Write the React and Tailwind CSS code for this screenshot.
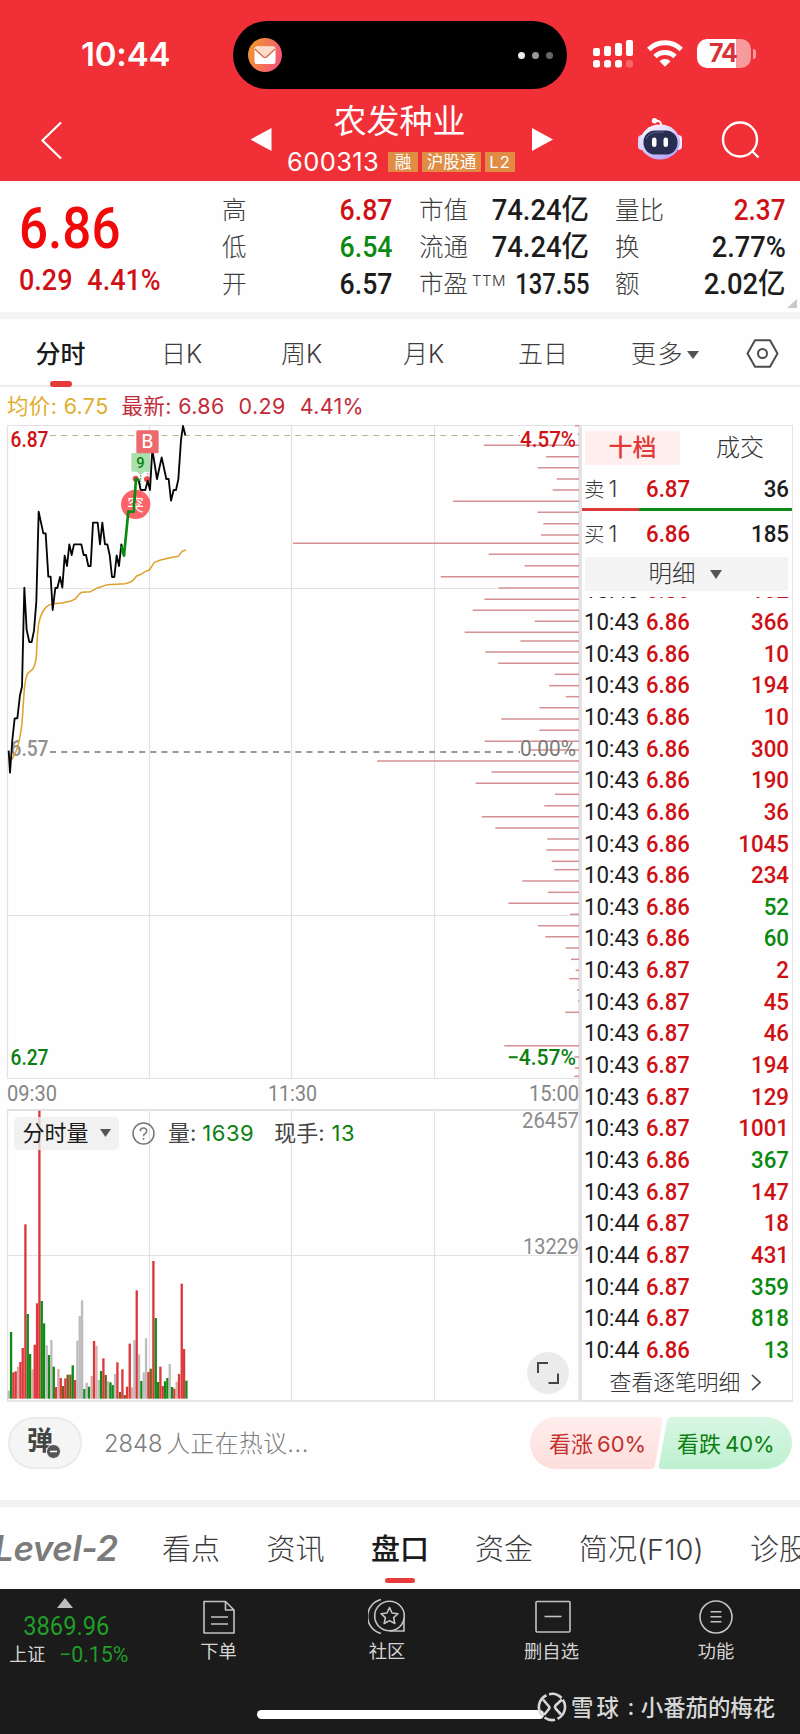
import React from "react";

const NUM = "font-['Roboto','Noto_Sans_CJK_SC',sans-serif] inline-block whitespace-nowrap";

/* ---------- data ---------- */

const trades = [
  ["10:43", "6.86", "366", "r"],
  ["10:43", "6.86", "10", "r"],
  ["10:43", "6.86", "194", "r"],
  ["10:43", "6.86", "10", "r"],
  ["10:43", "6.86", "300", "r"],
  ["10:43", "6.86", "190", "r"],
  ["10:43", "6.86", "36", "r"],
  ["10:43", "6.86", "1045", "r"],
  ["10:43", "6.86", "234", "r"],
  ["10:43", "6.86", "52", "g"],
  ["10:43", "6.86", "60", "g"],
  ["10:43", "6.87", "2", "r"],
  ["10:43", "6.87", "45", "r"],
  ["10:43", "6.87", "46", "r"],
  ["10:43", "6.87", "194", "r"],
  ["10:43", "6.87", "129", "r"],
  ["10:43", "6.87", "1001", "r"],
  ["10:43", "6.86", "367", "g"],
  ["10:43", "6.87", "147", "r"],
  ["10:44", "6.87", "18", "r"],
  ["10:44", "6.87", "431", "r"],
  ["10:44", "6.87", "359", "g"],
  ["10:44", "6.87", "818", "g"],
  ["10:44", "6.86", "13", "g"],
];

// [y, start x] of each traded-volume-by-price line; all end at the right edge of the plot
const chips = [
  [17, 885], [43, 893], [76, 611], [110, 798], [143, 773], [177, 830], [210, 818], [244, 519],
  [277, 772], [311, 790], [345, 783], [370, 39], [403, 626], [437, 734], [470, 482], [504, 656],
  [538, 613], [571, 578], [604, 764], [637, 554], [663, 721], [696, 616], [730, 654], [763, 824],
  [797, 807], [830, 857], [863, 778], [897, 664], [931, 778], [964, 614], [990, 750], [1023, 291],
  [1056, 634], [1090, 587], [1123, 825], [1157, 793], [1190, 605], [1224, 646], [1257, 802],
  [1290, 799], [1324, 815], [1349, 823], [1383, 727], [1417, 804], [1450, 685], [1483, 870],
  [1517, 774], [1550, 796], [1584, 857], [1618, 873], [1651, 887], [1676, 868], [1710, 891],
  [1743, 894], [1777, 856], [1877, 673], [1911, 883], [1944, 885], [1969, 883],
];

const volume = [
  [26, 932, "n"], [33, 756, "g"], [40, 877, "r"], [47, 874, "r"], [54, 860, "p"], [61, 846, "r"],
  [68, 804, "r"], [76, 433, "r"], [83, 702, "g"], [90, 822, "g"], [97, 868, "p"], [104, 794, "r"],
  [111, 670, "r"], [118, 92, "r"], [125, 663, "g"], [132, 730, "g"], [140, 796, "n"], [147, 825, "g"],
  [154, 780, "n"], [161, 860, "g"], [168, 921, "r"], [175, 867, "p"], [182, 894, "r"], [189, 918, "o"],
  [196, 895, "r"], [203, 884, "o"], [211, 884, "o"], [218, 856, "g"], [225, 900, "r"], [232, 782, "n"],
  [239, 708, "n"], [246, 661, "n"], [253, 927, "g"], [260, 908, "n"], [267, 920, "g"], [275, 888, "p"],
  [282, 783, "r"], [289, 797, "p"], [296, 900, "n"], [303, 873, "g"], [310, 835, "r"], [317, 885, "o"],
  [324, 904, "n"], [331, 907, "g"], [338, 915, "g"], [345, 882, "n"], [352, 847, "r"], [360, 936, "o"],
  [367, 868, "r"], [374, 945, "o"], [381, 920, "r"], [389, 791, "r"], [396, 922, "p"], [403, 780, "n"],
  [410, 631, "r"], [417, 823, "n"], [424, 903, "g"], [431, 877, "n"], [438, 775, "n"], [445, 876, "r"],
  [452, 866, "o"], [460, 543, "r"], [467, 714, "g"], [474, 906, "g"], [481, 860, "r"], [488, 918, "r"],
  [495, 904, "g"], [502, 894, "g"], [509, 852, "n"], [516, 921, "g"], [523, 926, "r"], [530, 905, "p"],
  [537, 882, "r"], [545, 611, "r"], [552, 807, "r"], [559, 902, "g"],
];

const barFill = { r: "#dc383c", g: "#118a16", n: "#bcbcbc", p: "#dba9a6", o: "#7c5a1a" };

/* ---------- header ---------- */

function Island() {
  return (
    <div className="flex h-[68px] w-[334px] items-center justify-between rounded-full bg-black pl-[15px] pr-[14px]">
      <svg width="34" height="34" viewBox="0 0 34 34">
        <defs>
          <linearGradient id="mail" x1="0" x2="1" y1="0.3" y2="0.7">
            <stop offset="0" stopColor="#f0982c" />
            <stop offset="1" stopColor="#f4507c" />
          </linearGradient>
        </defs>
        <circle cx="17" cy="17" r="17" fill="url(#mail)" />
        <rect x="6.5" y="8.5" width="21" height="17.5" rx="2.5" fill="#fff" />
        <path d="M6.5 10.5Q6.8 8.5 9 8.500H25Q27.200 8.500 27.500 10.500L18.500 19Q17 20.200 15.500 19Z" fill="#fbdcca" />
        <path d="M6.8 11l8.700 8q1.500 1.200 3 0l8.700-8" fill="none" stroke="#d4674a" strokeWidth="1.300" />
      </svg>
      <div className="flex gap-[7px]">
        <span className="size-[7px] rounded-full bg-[#ececec]" />
        <span className="size-[7px] rounded-full bg-[#999]" />
        <span className="size-[7px] rounded-full bg-[#666]" />
      </div>
    </div>
  );
}

function StatusBar() {
  return (
    <div className="flex h-[89px] items-start pt-[21px]">
      <div className="flex h-[68px] w-[233px] items-center pl-[81px] text-[33px] font-semibold tracking-[-0.2px] text-white">
        10:44
      </div>
      <Island />
      <div className="flex h-[68px] items-center pl-[25px] pb-[3px]">
        <svg width="42" height="29" viewBox="0 0 42 29" fill="#fff">
          <rect x="1" y="9" width="7" height="8" rx="2" />
          <rect x="12" y="7" width="7" height="10" rx="2" />
          <rect x="23" y="4" width="7" height="13" rx="2" />
          <rect x="34" y="1" width="7" height="16" rx="2" />
          <rect x="1" y="21" width="7" height="7.500" rx="2.500" />
          <rect x="12" y="21" width="7" height="7.500" rx="2.500" />
          <rect x="23" y="21" width="7" height="7.500" rx="2.500" />
          <rect x="34" y="21" width="7" height="7.500" rx="2.500" opacity="0.25" />
        </svg>
        <svg className="ml-[12px]" width="38" height="29" viewBox="0 0 38 29" fill="none" stroke="#fff" strokeWidth="5">
          <path d="M2.800 10.500A23 23 0 0 1 35.200 10.500" />
          <path d="M9 17.500A14.500 14.500 0 0 1 29 17.500" />
          <path d="M13.500 22.200A8 8 0 0 1 24.500 22.200L19 27.800Z" fill="#fff" stroke="none" />
        </svg>
        <div className="ml-[13px] flex h-[29px] w-[54px] items-center justify-center rounded-[10px] bg-[linear-gradient(90deg,#fff_73%,#f79a9c_73%)] pr-[2px] font-['Inter'] text-[25px] font-bold tracking-[-1px] text-[#d8323a]">
          74
        </div>
        <span className="ml-[2px] h-[10px] w-[3px] rounded-r-full bg-[#f79a9c]" />
      </div>
    </div>
  );
}

function Robot() {
  return (
    <svg width="46" height="44" viewBox="0 0 46 44">
      <defs>
        <linearGradient id="head" x1="0" x2="0.6" y1="0" y2="1">
          <stop offset="0" stopColor="#ffffff" />
          <stop offset="1" stopColor="#b9a6fb" />
        </linearGradient>
      </defs>
      <path d="M24 8Q24.500 4 19 3.500" fill="none" stroke="#fff" strokeWidth="2" />
      <circle cx="17.500" cy="3.700" r="2.700" fill="#fff" />
      <rect x="1" y="18" width="9" height="15" rx="4" fill="#d9d3fb" />
      <rect x="36" y="18" width="9" height="15" rx="4" fill="#f0ecff" />
      <ellipse cx="23" cy="25" rx="20" ry="17.500" fill="url(#head)" />
      <rect x="6.500" y="13.500" width="34" height="24" rx="11.500" fill="#282d52" />
      <path d="M9 22Q12 15 22 15H27" fill="none" stroke="#5a5f94" strokeWidth="1" />
      <rect x="15" y="20.500" width="4.500" height="9.500" rx="2.200" fill="#fff" />
      <rect x="26.500" y="20.500" width="4.500" height="9.500" rx="2.200" fill="#fff" />
    </svg>
  );
}

function NavBar() {
  return (
    <div className="flex h-[92px] items-start text-white">
      <svg className="ml-[40px] mt-[32px]" width="24" height="40" viewBox="0 0 24 40" fill="none" stroke="#fff" strokeWidth="2.200">
        <path d="M21 1.500L2.500 19.500L21 37.500" />
      </svg>
      <svg className="ml-[186px] mt-[38px]" width="22" height="25" viewBox="0 0 22 25">
        <path d="M0.500 12.500L21.500 1V24Z" fill="#fff" />
      </svg>
      <div className="ml-[15px] flex w-[229px] flex-col">
        <div className="flex h-[57px] items-center justify-center pt-[8px] text-[33px]">
          <span className="whitespace-nowrap pr-[4px] leading-none">农发种业</span>
        </div>
        <div className="flex h-[31px] items-center">
          <span className="inline-block w-[101px] text-[25.500px] leading-none tracking-[0.400px]">600313</span>
          <div className="flex gap-[4px] text-[16.500px] leading-[20px]">
            <span className="h-[20px] w-[30px] bg-[#e08c45] text-center">融</span>
            <span className="h-[20px] w-[59px] bg-[#e08c45] text-center">沪股通</span>
            <span className="h-[20px] w-[30px] bg-[#e08c45] text-center tracking-[1px]">L2</span>
          </div>
        </div>
      </div>
      <svg className="ml-[16px] mt-[38px]" width="21" height="25" viewBox="0 0 21 25">
        <path d="M21 12.500L0 1V24Z" fill="#fff" />
      </svg>
      <div className="ml-[84px] mt-[28px]">
        <Robot />
      </div>
      <svg className="ml-[38px] mt-[31px]" width="40" height="40" viewBox="0 0 40 40" fill="none" stroke="#fff" strokeWidth="2.400">
        <circle cx="19" cy="19.500" r="17" />
        <path d="M31 31L37.500 37.500" />
      </svg>
    </div>
  );
}

/* ---------- quote ---------- */

function Stat({ label, sup, value, color, scale = "scale-x-[.92]" }) {
  return (
    <div className="flex h-[37px] items-center justify-between">
      <span className="flex shrink-0 items-center whitespace-nowrap text-[24.500px] font-light leading-none text-[#3c3c3c]">
        {label}
        {sup && <span className="-mt-[8px] -mr-[20px] ml-[4px] w-[34px] text-[15px] leading-none tracking-[0.500px]">{sup}</span>}
      </span>
      <span className={NUM + " origin-right text-[29px] font-medium leading-none " + scale + " " + color}>{value}</span>
    </div>
  );
}

function Quote() {
  return (
    <div className="flex h-[131px] bg-[#fefefe]">
      <div className="flex w-[222px] flex-col pl-[19px]">
        <div className={NUM + " mt-[18px] h-[62px] origin-left scale-x-[.89] text-[57.500px] font-medium leading-[60px] text-[#f00a0a]"}>6.86</div>
        <div className={NUM + " h-[36px] origin-left scale-x-[.93] text-[29px] font-medium leading-[38px] text-[#cf1014]"}>
          0.29<span className="ml-[16px]">4.41%</span>
        </div>
      </div>
      <div className="w-[171px] pt-[11px]">
        <Stat label="高" value="6.87" color="text-[#cf1014]" />
        <Stat label="低" value="6.54" color="text-[#0a8a10]" />
        <Stat label="开" value="6.57" color="text-[#1c1c1c]" />
      </div>
      <div className="ml-[26px] w-[170px] pt-[11px]">
        <Stat label="市值" value="74.24亿" color="text-[#1c1c1c]" scale="scale-x-[.945]" />
        <Stat label="流通" value="74.24亿" color="text-[#1c1c1c]" scale="scale-x-[.945]" />
        <Stat label="市盈" sup="TTM" value="137.55" color="text-[#1c1c1c]" scale="scale-x-[.82]" />
      </div>
      <div className="ml-[26px] w-[171px] pt-[11px]">
        <Stat label="量比" value="2.37" color="text-[#cf1014]" scale="scale-x-[.9]" />
        <Stat label="换" value="2.77%" color="text-[#1c1c1c]" scale="scale-x-[.94]" />
        <Stat label="额" value="2.02亿" color="text-[#1c1c1c]" scale="scale-x-[.945]" />
      </div>
      <svg className="mt-[118px] ml-[1px] shrink-0" width="10" height="10" viewBox="0 0 10 10">
        <path d="M10 0V9H0Z" fill="#c8c8c8" />
      </svg>
    </div>
  );
}

function PeriodTabs() {
  return (
    <div className="flex h-[68px] items-start border-b-2 border-[#ececec] bg-[#fefefe] text-[25px] font-light text-[#3c3c3c]">
      <div className="flex w-[121px] flex-col items-center">
        <span className="flex h-[62px] items-center pt-[9px] font-medium text-[#1a1a1a]">分时</span>
        <span className="h-[6px] w-[22px] rounded-full bg-[#e63b38]" />
      </div>
      <div className="flex h-[62px] w-[121px] items-center justify-center pt-[9px]">日K</div>
      <div className="flex h-[62px] w-[119px] items-center justify-center pt-[9px]">周K</div>
      <div className="flex h-[62px] w-[125px] items-center justify-center pt-[9px]">月K</div>
      <div className="flex h-[62px] w-[114px] items-center justify-center pt-[9px]">五日</div>
      <div className="flex h-[62px] w-[128px] items-center justify-center pt-[9px]">
        <span className="pl-[2px] tracking-[1.500px]">更多</span>
        <svg className="ml-[3px]" width="12" height="8" viewBox="0 0 12 8"><path d="M0 0H12L6 8Z" fill="#555" /></svg>
      </div>
      <svg className="ml-[18px] mt-[20px]" width="33" height="29" viewBox="0 0 33 29" fill="none" stroke="#4c4c4c" strokeWidth="2">
        <path d="M9 1.200H24L31.500 14.500L24 27.800H9L1.500 14.500Z" strokeLinejoin="round" />
        <circle cx="16.500" cy="14.500" r="4.500" />
      </svg>
    </div>
  );
}

/* ---------- charts ---------- */

const DIN = "Roboto, sans-serif";

function PriceChart() {
  return (
    <svg className="block overflow-visible" width="580" height="690" viewBox="0 420 580 690">
      <g stroke="#e2e2e4" strokeWidth="1.200" fill="none">
        <path d="M7.500 425.500H579M7.500 588.500H579M7.500 915.500H579M7.500 1078.500H579" />
        <path d="M7.500 425V1079M149.500 425V1079M291.500 425V1079M434.500 425V1079" />
      </g>
      <path d="M579.300 425V1110" stroke="#dddde0" strokeWidth="1.500" />
      <path d="M50 435.500H520" stroke="#c0b28c" strokeWidth="1.200" strokeDasharray="6 5.150" />
      <path d="M50 752H520" stroke="#777" strokeWidth="1.300" strokeDasharray="6 5.150" />
      <g transform="translate(280 420) scale(0.33333)" stroke="#d59092" strokeWidth="4.500">
        {chips.map(([y, x]) => (
          <path key={y} d={`M${x} ${y}H897`} />
        ))}
      </g>
      <g fontFamily={DIN} fontSize="21.500">
        <text x="10.500" y="446.500" fill="#cf1014" fontWeight="500" textLength="38" lengthAdjust="spacingAndGlyphs">6.87</text>
        <text x="576" y="446.500" fill="#cf1014" fontWeight="500" textAnchor="end" textLength="56" lengthAdjust="spacingAndGlyphs">4.57%</text>
        <text x="10.500" y="755.500" fill="#909090" fontWeight="500" textLength="38" lengthAdjust="spacingAndGlyphs">6.57</text>
        <text x="576" y="755.500" fill="#7b7b7b" textAnchor="end" textLength="56" lengthAdjust="spacingAndGlyphs">0.00%</text>
        <text x="10.500" y="1065" fill="#0a7f10" fontWeight="500" textLength="38" lengthAdjust="spacingAndGlyphs">6.27</text>
        <text x="576" y="1065" fill="#0a7f10" fontWeight="500" textAnchor="end" textLength="69" lengthAdjust="spacingAndGlyphs">−4.57%</text>
        <text x="7" y="1101" fill="#858585" textLength="50" lengthAdjust="spacingAndGlyphs">09:30</text>
        <text x="268" y="1101" fill="#858585" textLength="49" lengthAdjust="spacingAndGlyphs">11:30</text>
        <text x="579" y="1101" fill="#858585" textAnchor="end" textLength="50" lengthAdjust="spacingAndGlyphs">15:00</text>
      </g>
      <g transform="translate(0 420) scale(0.33333)" fill="none" strokeLinejoin="round">
        <path
          stroke="#dfa02c"
          strokeWidth="4.500"
          d="M36 1018L50 990Q60 960 66 910L72 820Q75 780 82 762Q88 755 98 748Q106 735 109 710L112 650L116 610Q124 575 140 560Q150 552 160 551L185 549L210 544L226 537L236 524L245 517L272 515L290 505L322 494L375 491L390 487L398 482L410 468L425 462L435 455L448 450L463 427L482 420L510 413L535 409L546 394L558 390"
        />
        <path
          stroke="#050505"
          strokeWidth="5.500"
          d="M26 992L30 1058L37 960L44 895H52L60 825L66 800L73 503L80 630L88 666H95L102 632L109 545L116 275L123 308L130 340H137L145 470H152L158 570L166 504H172L180 471L187 503L194 407L201 438L208 373L215 405L222 373H244L251 405H258L265 438H272L279 308H293L300 373L307 308L315 373H322L329 405L336 471H343L350 406L357 438L364 373L372 405"
        />
        <path stroke="#f0656c" strokeWidth="4" strokeDasharray="4 4.500" d="M443 100V172" />
        <path stroke="#0a8a10" strokeWidth="3" strokeDasharray="4 4" d="M422 166V206" />
        <circle cx="407" cy="176" r="9" fill="#ee4a50" />
        <circle cx="441" cy="178" r="9" fill="#ee4a50" />
        <path stroke="#050505" strokeWidth="5.500" d="M415 177L422 210H436L443 182L450 210L457 88L471 177L485 112L499 177H506L513 242L521 210H528L535 178L543 60L549 18L556 46" />
        <circle cx="407" cy="253" r="44" fill="#fc6469" />
        <text x="407" y="272" textAnchor="middle" fill="#fff" fontFamily="Noto Sans CJK SC, sans-serif" fontSize="50">突</text>
        <path stroke="#0a8a10" strokeWidth="8" d="M364 378L372 407L385 275H401L408 176L417 182" />
        <path d="M398 99H446Q450 99 450 103V151Q450 155 446 155H433L422 166L411 155H398Q394 155 394 151V103Q394 99 398 99Z" fill="#aadfae" />
        <text x="421" y="144" textAnchor="middle" fill="#0a7f10" fontFamily={DIN} fontSize="44" fontWeight="500">9</text>
        <rect x="409" y="31" width="67" height="69" rx="5" fill="#ee686d" />
        <text x="442.500" y="85" textAnchor="middle" fill="#fff" fontFamily="Inter, sans-serif" fontSize="54" fontWeight="500">B</text>
      </g>
    </svg>
  );
}

function VolumeChart() {
  return (
    <div className="relative h-[292px] w-[580px]">
      <svg className="block overflow-visible" width="580" height="292" viewBox="0 1110 580 292">
        <g stroke="#e2e2e4" strokeWidth="1.200" fill="none">
          <path d="M7.500 1255.500H579M7.500 1110V1401M149.500 1110V1401M291.500 1110V1401M434.500 1110V1401" />
        </g>
        <path d="M7 1110H579" stroke="#e2e2e4" strokeWidth="2" />
        <path d="M579.300 1110V1401" stroke="#dddde0" strokeWidth="1.500" />
        <path d="M7 1401H580" stroke="#e6e6e6" strokeWidth="2" />
        <g transform="translate(0 1080) scale(0.33333)">
          {volume.map(([x, y, c]) => (
            <rect key={x} x={x - 3.300} y={y} width="7" height={956 - y} fill={barFill[c]} />
          ))}
        </g>
        <g fontFamily={DIN} fontSize="21.500" fill="#8c8c8c">
          <text x="579" y="1128" textAnchor="end" textLength="57" lengthAdjust="spacingAndGlyphs">26457</text>
          <text x="579" y="1254" textAnchor="end" textLength="56" lengthAdjust="spacingAndGlyphs">13229</text>
        </g>
      </svg>
      <div className="absolute left-[14px] top-[7px] flex h-[33px] items-center whitespace-nowrap text-[22px] leading-none">
        <div className="flex h-[33px] w-[105px] items-center justify-center gap-[11px] rounded-[5px] bg-[#eeeeee]/80 pb-[1px] text-[#1a1a1a]">
          <span>分时量</span>
          <svg width="11" height="8" viewBox="0 0 11 8"><path d="M0 0H11L5.500 8Z" fill="#555" /></svg>
        </div>
        <svg className="ml-[13px]" width="23" height="23" viewBox="0 0 23 23" fill="none" stroke="#777" strokeWidth="1.500">
          <circle cx="11.500" cy="11.500" r="10.500" />
          <path d="M8.300 9.200Q8.300 6 11.500 6T14.700 9.200Q14.700 10.700 13 11.700Q11.500 12.600 11.500 14.200M11.500 16V17.800" />
        </svg>
        <span className="ml-[13px] pb-[1px] text-[#444]">量:</span>
        <span className="ml-[6px] pb-[1px] tracking-[0.500px] text-[#0a7f10]">1639</span>
        <span className="ml-[20px] pb-[1px] text-[#444]">现手:</span>
        <span className="ml-[7px] pb-[1px] tracking-[0.500px] text-[#0a7f10]">13</span>
      </div>
      <div className="absolute left-[527px] top-[242px] flex size-[42px] items-center justify-center rounded-full bg-[#ebebeb]">
        <svg width="22" height="22" viewBox="0 0 22 22" fill="none" stroke="#444" strokeWidth="2">
          <path d="M1 11V1H11M21 11.500V21H11.500" />
        </svg>
      </div>
    </div>
  );
}

/* ---------- order book ---------- */

function BookRow({ side, price, qty }) {
  return (
    <div className="flex h-[36px] items-center leading-none">
      <span className="w-[62px] text-[20.500px] font-light text-[#3c3c3c]">{side}<span className="ml-[4px] text-[22.500px]">1</span></span>
      <span className={NUM + " w-[60px] origin-left scale-x-[.91] text-[24.500px] font-medium text-[#cf1014]"}>{price}</span>
      <span className={NUM + " flex-1 origin-right scale-x-[.91] text-right text-[24.500px] font-medium text-[#1c1c1c]"}>{qty}</span>
    </div>
  );
}

function TradeRow({ row }) {
  return (
    <div className="flex h-[31.650px] shrink-0 items-center leading-none">
      <span className={NUM + " w-[62px] origin-left scale-x-[.91] text-[24.500px] font-[450] text-[#1c1c1c]"}>{row[0]}</span>
      <span className={NUM + " w-[60px] origin-left scale-x-[.9] text-[24.500px] font-medium text-[#cf1014]"}>{row[1]}</span>
      <span className={NUM + " flex-1 origin-right scale-x-[.91] text-right text-[24.500px] font-medium " + (row[3] === "r" ? "text-[#cf1014]" : "text-[#0a8a10]")}>{row[2]}</span>
    </div>
  );
}

function OrderBook() {
  return (
    <div className="mt-[5px] flex h-[977px] w-[213px] flex-col border-b-2 border-l-2 border-r border-t border-[#e4e4e4] bg-[#fefefe]">
      <div className="flex h-[39px] shrink-0 items-end pl-[3px] text-[24px] leading-none">
        <span className="flex h-[34px] w-[95px] items-center justify-center bg-[#fff0ef] font-medium text-[#e23a36]">十档</span>
        <span className="ml-[28px] flex h-[34px] w-[64px] items-center justify-center font-light text-[#333]">成交</span>
      </div>
      <div className="mt-[6px] shrink-0 pl-[2px] pr-[3px]"><BookRow side="卖" price="6.87" qty="36" /></div>
      <div className="mt-[1px] flex h-[3px] shrink-0">
        <span className="w-[57px] bg-[#dc383c]" />
        <span className="flex-1 bg-[#118a16]" />
      </div>
      <div className="mt-[5px] shrink-0 pl-[2px] pr-[3px]"><BookRow side="买" price="6.86" qty="185" /></div>
      <div className="ml-[3px] mt-[5px] flex h-[34px] w-[203px] shrink-0 items-center justify-center gap-[14px] bg-[#f4f4f4] text-[23.500px] font-light leading-none text-[#333]">
        <span className="-ml-[3px]">明细</span>
        <svg width="12" height="9" viewBox="0 0 12 9"><path d="M0 0H12L6 9Z" fill="#555" /></svg>
      </div>
      <div className="mt-[6px] flex h-[9.500px] shrink-0 flex-col justify-end overflow-hidden pl-[2px] pr-[3px]">
        <TradeRow row={["10:43", "6.86", "102", "r"]} />
      </div>
      <div className="flex shrink-0 flex-col pl-[2px] pr-[3px]">
        {trades.map((t, i) => <TradeRow key={i} row={t} />)}
      </div>
      <div className="flex flex-1 items-center justify-center gap-[11px] pr-[3px] text-[21.800px] font-light leading-none text-[#333]">
        <span>查看逐笔明细</span>
        <svg width="10" height="17" viewBox="0 0 10 17" fill="none" stroke="#444" strokeWidth="1.700"><path d="M1 1L9 8.500L1 16" /></svg>
      </div>
    </div>
  );
}

/* ---------- discussion ---------- */

function Discussion() {
  return (
    <div className="flex h-[98px] items-start bg-[#fefefe] pl-[8px] pt-[15px]">
      <div className="relative flex h-[52px] w-[74px] items-center rounded-full border-2 border-[#ebebeb] bg-[#f5f5f5] pl-[17px] text-[26px] font-bold leading-none text-[#444]">
        <span className="-mt-[4px]">弹</span>
        <svg className="absolute left-[36px] top-[25px]" width="15" height="15" viewBox="0 0 15 15">
          <circle cx="7.500" cy="7.500" r="7" fill="#555" stroke="#f5f5f5" />
          <path d="M4 7.500H11" stroke="#fff" strokeWidth="1.500" />
        </svg>
      </div>
      <div className="flex h-[52px] w-[448px] items-center pl-[22px] pt-[2px] text-[23.700px] font-light text-[#7c7c7c]">
        <span>2848</span><span className="ml-[4px] tracking-[0.500px]">人正在热议...</span>
      </div>
      <div className="relative flex h-[52px] w-[262px] items-center text-[22px] leading-none">
        <svg className="absolute inset-0" width="262" height="52" viewBox="0 0 262 52">
          <defs>
            <linearGradient id="up" x1="0" x2="0" y1="0" y2="1">
              <stop offset="0" stopColor="#feeeed" />
              <stop offset="1" stopColor="#fddedb" />
            </linearGradient>
            <linearGradient id="down" x1="0" x2="0" y1="0" y2="1">
              <stop offset="0" stopColor="#d9f6e3" />
              <stop offset="1" stopColor="#bdf1d0" />
            </linearGradient>
          </defs>
          <path d="M26 0H129Q133 0 132.500 4L125 48Q124 52 120 52H26A26 26 0 0 1 26 0Z" fill="url(#up)" />
          <path d="M142 0H236A26 26 0 0 1 236 52H132Q128.500 52 129 48L137 4Q138 0 142 0Z" fill="url(#down)" />
        </svg>
        <span className="relative w-[128px] pl-[19px] pt-[1px] text-[#c42f2f]">看涨<span className="ml-[4px]">60%</span></span>
        <span className="relative w-[134px] pl-[19px] pt-[1px] text-[#0a7f10]">看跌<span className="ml-[4px]">40%</span></span>
      </div>
    </div>
  );
}

function SectionTabs() {
  return (
    <div className="flex h-[82px] items-start overflow-hidden whitespace-nowrap bg-[#fefefe] text-[29px] font-light leading-none text-[#3c3c3c]">
      <span className="-ml-[6px] flex h-[71px] w-[168px] shrink-0 items-center pt-[12px] text-[35px] font-semibold italic tracking-[-0.400px] text-[#7b7b7b]">Level-2</span>
      <span className="flex h-[71px] w-[104.500px] shrink-0 items-center pt-[13px]">看点</span>
      <span className="flex h-[71px] w-[104.500px] shrink-0 items-center pt-[13px]">资讯</span>
      <span className="flex w-[104px] shrink-0 flex-col">
        <span className="flex h-[71px] items-center pt-[13px] font-medium text-[#1a1a1a]">盘口</span>
        <span className="ml-[14px] h-[5px] w-[30px] rounded-full bg-[#e63b38]" />
      </span>
      <span className="flex h-[71px] w-[104px] shrink-0 items-center pt-[13px]">资金</span>
      <span className="flex h-[71px] w-[171px] shrink-0 items-center pt-[13px]">简况(F10)</span>
      <span className="flex h-[71px] shrink-0 items-center pt-[13px]">诊股</span>
    </div>
  );
}

/* ---------- bottom bar ---------- */

function BottomItem({ label, children, width }) {
  return (
    <div className={"flex flex-col items-center pt-[9px] text-[18.300px] leading-none text-[#d4d4d4] " + width}>
      <svg width="38" height="38" viewBox="0 0 38 38" fill="none" stroke="#c4c4c4" strokeWidth="1.600">{children}</svg>
      <span className="mt-[6px]">{label}</span>
    </div>
  );
}

function BottomBar() {
  return (
    <div className="flex h-[145px] flex-col bg-[#1b1b1b]">
      <div className="flex h-[104px]">
        <div className="flex w-[134px] flex-col items-center pt-[9px]">
          <svg className="mr-[4px]" width="16" height="10" viewBox="0 0 16 10"><path d="M0 10L8 0L16 10Z" fill="#bdbdbd" /></svg>
          <span className={NUM + " -ml-[2px] mt-[4px] scale-x-[.91] text-[26px] leading-[29px] text-[#1f9e28]"}>3869.96</span>
          <div className="-ml-[1px] mt-[1px] flex items-center leading-[26px]">
            <span className="w-[50px] text-[18px] text-[#d4d4d4]">上证</span>
            <span className={NUM + " mr-[-7px] origin-left scale-x-[.97] text-[22px] text-[#1f9e28]"}>−0.15%</span>
          </div>
        </div>
        <BottomItem label="下单" width="w-[169px]">
          <path d="M4 3.500H25.500L34 12V35H4ZM25.500 3.500V12H34M11 19H28M11 26H28" strokeLinejoin="round" />
        </BottomItem>
        <BottomItem label="社区" width="w-[168px]">
          <circle cx="21.500" cy="18" r="14.800" />
          <path d="M21.500 33H36V20M13 1.500A17.500 17.500 0 0 0 13 35.500" />
          <path d="M21.500 9.500L24 15L30 15.700L25.600 19.700L26.800 25.500L21.500 22.600L16.200 25.500L17.400 19.700L13 15.700L19 15Z" strokeLinejoin="round" />
        </BottomItem>
        <BottomItem label="删自选" width="w-[161px]">
          <rect x="3" y="3.500" width="34" height="30.500" rx="1" />
          <path d="M11.500 18.500H28.500" />
        </BottomItem>
        <BottomItem label="功能" width="w-[168px]">
          <circle cx="19" cy="19" r="16" />
          <path d="M13.500 13.800H24.500M13.500 18.800H24.500M13.500 23.800H24.500" />
        </BottomItem>
      </div>
      <div className="relative h-[41px]">
        <div className="ml-[257px] mt-[17px] h-[9px] w-[287px] rounded-full bg-white" />
        <div className="absolute left-[537px] top-0 flex h-[28px] items-center whitespace-nowrap text-[22.400px] font-medium leading-none text-[#d8d8d8]">
          <svg width="30" height="30" viewBox="0 0 30 30" fill="none" stroke="#d8d8d8" strokeWidth="2.600">
            <path d="M9.500 3.200A13 13 0 0 0 5.500 24M12 2.200A13 13 0 0 1 24.500 6M25.800 7.800A13 13 0 0 1 20.500 26.800M18 27.800A13 13 0 0 1 7.500 25.500" />
            <path d="M6 7.500L12 14.500Q13 15.800 11.500 17.500L7 23M25 7.500L18.500 13.500Q17.300 15 18.500 16.500L24 22.500" />
          </svg>
          <span className="ml-[4px] pt-[2px] tracking-[3px]">雪球</span>
          <span className="w-[18px] text-center">:</span>
          <span className="ml-[1px] pt-[2px]">小番茄的梅花</span>
        </div>
      </div>
    </div>
  );
}

export default function App() {
  return (
    <div className="h-[1734px] w-[800px] overflow-hidden bg-[#fefefe] font-['Inter','Noto_Sans_CJK_SC',sans-serif]">
      <header className="h-[181px] bg-[#f03036]">
        <StatusBar />
        <NavBar />
      </header>
      <Quote />
      <div className="h-[7px] bg-[#f4f4f4]" />
      <PeriodTabs />
      <div className="flex h-[33px] items-center whitespace-nowrap pl-[7px] pt-[6px] text-[21.500px] leading-none tracking-[0.350px] text-[#c22c3a]">
        <span className="text-[#dfae30]">均价: 6.75</span>
        <span className="ml-[13px]">最新: 6.86</span>
        <span className="ml-[14px]">0.29</span>
        <span className="ml-[14px]">4.41%</span>
      </div>
      <div className="flex h-[982px]">
        <div className="w-[580px]">
          <PriceChart />
          <VolumeChart />
        </div>
        <OrderBook />
      </div>
      <Discussion />
      <div className="h-[7px] bg-[#f1f1f1]" />
      <SectionTabs />
      <BottomBar />
    </div>
  );
}
